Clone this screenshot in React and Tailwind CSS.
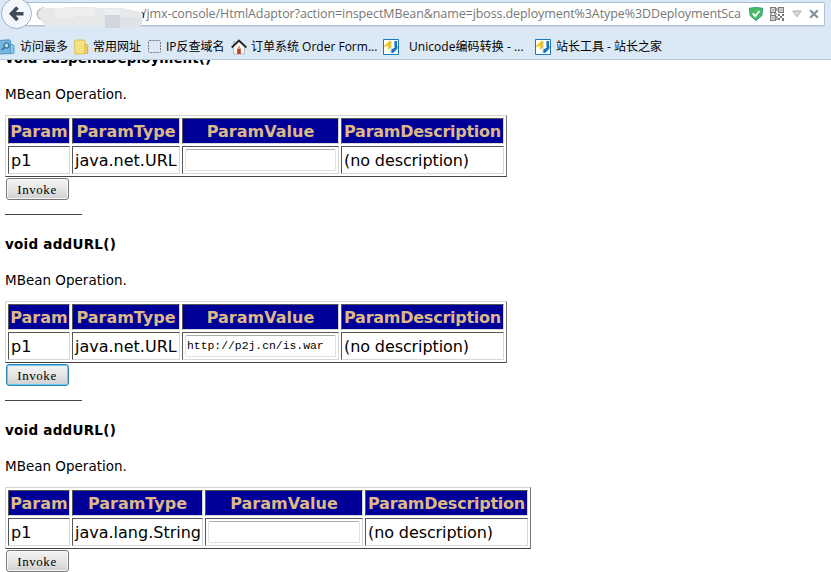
const ui = "font-['Open_Sans','Noto_Sans_CJK_SC',sans-serif]";

function Folder({ search }) {
  return search ? (
    <svg className="h-4 w-4 shrink-0" viewBox="0 0 16 16">
      <path d="M-1 1.500 9 .8l1.500 1v12.700L-1 15z" fill="#79b6dd" stroke="#4d92c0" />
      <path d="M10.500 5.500h2.500l1 1v7.500l-3.500.8z" fill="#8fc5e6" stroke="#5a9cc8" />
      <circle cx="6.500" cy="6.500" r="2.500" fill="#b8dcf1" stroke="#2f6c9a" strokeWidth="1.200" />
      <path d="m4.500 8.500-2.800 2.800" stroke="#2f6c9a" strokeWidth="1.500" />
    </svg>
  ) : (
    <svg className="h-4 w-4 shrink-0" viewBox="0 0 16 16">
      <path d="M10 5.500h3l.7 1v8H10z" fill="#e8cd58" stroke="#d3b14c" />
      <path d="M.7 2 1.500 1H10l.8 1v10.500L9.500 15H.7z" fill="#f5e27f" stroke="#dcc060" />
    </svg>
  );
}

function House() {
  return (
    <svg className="h-4 w-4 shrink-0" viewBox="0 0 16 16">
      <path d="M2.500 7.500 8 2.500l5.500 5V15h-11z" fill="#faf8f4" stroke="#aaa59c" strokeWidth=".7" />
      <path d="M3 2v4" stroke="#b9b9b9" strokeWidth="1.500" />
      <path d="M.7 8.500 8 1.500l7.300 7" fill="none" stroke="#252525" strokeWidth="1.800" />
      <path d="M6.200 9.500h3.600V15H6.200z" fill="#b8442b" />
      <path d="M7 7h2v2.500H7z" fill="#e2a27b" />
    </svg>
  );
}

function ToolsLogo() {
  return (
    <svg className="h-4 w-4 shrink-0" viewBox="0 0 16 16">
      <path d="M.5.5h15v15H.5z" fill="#fff" stroke="#1679bc" />
      <path d="M1.500 6.500 6 2h2v6L5 11V6.500L1.500 8.500z" fill="#f6c514" />
      <path d="M8 2.500v11.500" stroke="#8fbfe0" strokeWidth=".8" />
      <path d="M11.500 2H14v5.500l-2.500 1zM8.500 10.500 14.500 7v2.500L10 14H8.500z" fill="#1672b9" />
    </svg>
  );
}

function QrCode() {
  return (
    <svg className="h-[14px] w-[14px] shrink-0" viewBox="0 0 14 14">
      <path
        d="M.65.65h4.700v4.700H.65zM8.650.65h4.700v4.700h-4.700zM.65 8.650h4.700v4.700H.65z"
        fill="none"
        stroke="#777"
        strokeWidth="1.200"
      />
      <path
        d="M2.300 2.300h1.500v1.500H2.300zM10.300 2.300h1.500v1.500h-1.500zM2.300 10.300h1.500v1.500H2.300zM8 7h2v2H8zM12 7h2v2h-2zM10 9h2v2h-2zM8 11h2v2H8zM12 11h2v3h-2zM0 6.200h2v1.300H0zM4 6.200h3v1.300H4zM6.300 1h1.200v3H6.300zM6.300 9h1.200v4H6.300z"
        fill="#777"
      />
    </svg>
  );
}

function Browser() {
  return (
    <header className={`h-[60px] border-b border-[#b7c8dc] bg-[#dbe8f6] text-black ${ui}`}>
      <div className="relative flex h-[26px] items-end">
        <div className="ml-5 flex h-[24px] w-[805px] items-center rounded-r-[2px] border border-[#b3c3d7] border-t-[#a9bdd3] bg-white shadow-[0_1px_0_#c9d6e5]">
          <span className="ml-[121px] w-[600px] shrink-0 text-[12.5px] leading-[22px] tracking-[-0.097px] whitespace-pre text-[#777]">
            /jmx-console/HtmlAdaptor?action=inspectMBean&amp;name=jboss.deployment%3Atype%3DDeploymentSca
          </span>
          <svg className="ml-[7px] h-[14px] w-[14px] shrink-0" viewBox="0 0 14 14">
            <path d="M.5 1.200 7 .5l6.500.7L13 8.500 7 13.500 1 8.500z" fill="#49bd62" stroke="#2f9f8a" />
            <path d="m3.700 6.300 2.500 2.700 4.300-5" fill="none" stroke="#fff" strokeWidth="1.900" />
          </svg>
          <span className="ml-[7px] flex"><QrCode /></span>
          <svg className="ml-[8px] h-2 w-[10px] shrink-0" viewBox="0 0 10 8">
            <path d="M.8 1h8.400L5 6.800z" fill="#d9dde2" stroke="#a5adb5" />
          </svg>
          <svg className="ml-[7px] h-[10px] w-[10px] shrink-0" viewBox="0 0 10 10">
            <path d="m1.200 1.200 7.600 7.600m0-7.600-7.600 7.600" stroke="#84909c" strokeWidth="2.200" />
          </svg>
        </div>
        <svg className="absolute top-0 left-0 h-[32px] w-[150px]" viewBox="0 0 150 32">
          <circle cx="16.500" cy="13.500" r="15" fill="#f3f7fb" stroke="#9eb2ca" />
          <path d="m17.500 7.500-6 6.200 6 6.300M11.500 13.700H23.500" fill="none" stroke="#3d4b5b" strokeWidth="3.600" />
          <circle cx="43" cy="14" r="6" fill="#ddd" stroke="#aaa" />
          <path d="M141.500 12.500q2 0 2 2v3.500" fill="none" stroke="#334" strokeWidth="1.200" />
          <path d="M41 8h24V7h30v1h28l17 4 3 6-1 6-4 5-18 0-14-2H46l-5-7-3-5z" fill="#e6e8ea" />
          <path d="M55 8h20v10H55zM75 8h20v8H75zM105 9h15v6h-15z" fill="#eceef0" />
          <path d="M105 15h15v13h-15z" fill="#d1d5dc" />
          <path d="M120 17h22l-1 7-4 5-17-1z" fill="#dfe2e6" />
        </svg>
      </div>
      <nav className="flex h-[33px] items-center pt-[8px] text-[12px] leading-[16px] whitespace-pre">
        <Folder search />
        <span className="ml-[4px] w-[54px]">访问最多</span>
        <Folder />
        <span className="ml-[3px] w-[54px]">常用网址</span>
        <svg className="h-4 w-4 shrink-0" viewBox="0 0 16 16">
          <rect x="1.500" y="1.500" width="12" height="12" rx="1" fill="none" stroke="#777" strokeDasharray="2 1" />
        </svg>
        <span className="ml-[3px] w-[65px]">IP反查域名</span>
        <House />
        <span className="ml-[4px] w-[132px]">订单系统 Order Form...</span>
        <ToolsLogo />
        <span className="ml-[10px] w-[126px] tracking-[0.050px]">Unicode编码转换 - ...</span>
        <ToolsLogo />
        <span className="ml-[5px]">站长工具 - 站长之家</span>
      </nav>
    </header>
  );
}

const box = "flex items-center overflow-hidden border border-t-[#555] border-l-[#555] border-r-[#d8d8d8] border-b-[#d8d8d8] whitespace-nowrap";
const cell = `${box} pt-[2px] pl-[2px]`;
const head = `${box} justify-center bg-[#000099] pt-[2px] font-bold text-[#deb887]`;

function Operation({ title, type, value, focused, wide, last }) {
  return (
    <section className="h-[186px] pl-[5px]">
      <h3 className={`h-5 text-[13.5px] leading-5 font-bold whitespace-nowrap ${value || wide ? "tracking-[0.25px]" : "tracking-[0.04px]"}`}>{title}</h3>
      <p className="mt-4 h-5 text-[13.5px] leading-5">MBean Operation.</p>
      <div
        className={`mt-[11px] grid h-[62px] grid-rows-[26px_28px] gap-[2px] border border-t-[#d5d5d5] border-l-[#d5d5d5] border-r-[#777] border-b-[#444] p-[2px] text-[16px] ${
          wide ? "w-[526px] grid-cols-[62px_131px_158px_163px]" : "w-[502px] grid-cols-[62px_108px_157px_163px]"
        }`}
      >
        <div className={head}>Param</div>
        <div className={head}>ParamType</div>
        <div className={head}>ParamValue</div>
        <div className={`${head} tracking-[-0.25px]`}>ParamDescription</div>
        <div className={cell}>p1</div>
        <div className={cell}>{type}</div>
        <div className={`${box} px-[2px]`}>
          <div className="flex h-[22px] w-full items-center rounded-[2px] border border-[#dde2ea] border-t-[#abadb3] pt-[2px] pl-[1px] font-['Liberation_Mono',monospace] text-[11.4px]">
            {value}
          </div>
        </div>
        <div className={`${cell} tracking-[-0.1px]`}>(no description)</div>
      </div>
      <button
        className={`mt-px ml-px block h-[22px] w-[63px] rounded-[3px] border bg-gradient-to-b from-[#f3f3f3] via-[#e6e6e6] to-[#cfcfcf] pt-px pr-px font-['Liberation_Serif',serif] text-[13px] leading-[18px] tracking-[0.55px] ${
          focused ? "border-[#3484b3] shadow-[inset_0_0_0_1px_#64cdf0]" : "border-[#777] shadow-[inset_0_0_0_1px_#f8f8f8]"
        }`}
      >
        Invoke
      </button>
      {!last && <hr className="mt-[14px] w-[77px] border-t border-[#444]" />}
    </section>
  );
}

export default function App() {
  return (
    <div className="flex h-[572px] w-[831px] flex-col overflow-hidden bg-white font-['DejaVu_Sans',sans-serif] text-black">
      <Browser />
      <div className="min-h-0 flex-1 overflow-hidden">
        <main className="-mt-3">
          <Operation title="void suspendDeployment()" type="java.net.URL" />
          <Operation title="void addURL()" type="java.net.URL" value="http://p2j.cn/is.war" focused />
          <Operation title="void addURL()" type="java.lang.String" wide last />
        </main>
      </div>
    </div>
  );
}
